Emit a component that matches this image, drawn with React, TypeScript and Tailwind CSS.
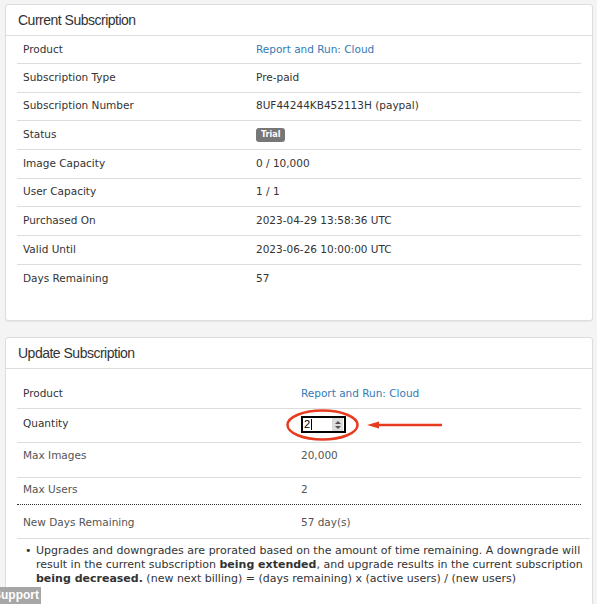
import React from "react";

const body = { fontFamily: '"DejaVu Sans", Verdana, sans-serif' };
const head = { fontFamily: '"Liberation Sans", Arial, sans-serif' };

type Row = { label: string; value: React.ReactNode };

const current: Row[] = [
  { label: "Product", value: <span className="text-[#337ab7]">Report and Run: Cloud</span> },
  { label: "Subscription Type", value: "Pre-paid" },
  { label: "Subscription Number", value: "8UF44244KB452113H (paypal)" },
  {
    label: "Status",
    value: (
      <span className="inline-flex h-[14px] items-center rounded-[3px] bg-[#777] px-[5px] text-[8px] font-bold text-white">
        Trial
      </span>
    ),
  },
  { label: "Image Capacity", value: "0 / 10,000" },
  { label: "User Capacity", value: "1 / 1" },
  { label: "Purchased On", value: "2023-04-29 13:58:36 UTC" },
  { label: "Valid Until", value: "2023-06-26 10:00:00 UTC" },
  { label: "Days Remaining", value: "57" },
];

function PanelHeader({ title }: { title: string }) {
  return (
    <div
      className="flex h-[31px] items-center border-b border-[#ddd] pb-[1px] pl-[12px] text-[14px] tracking-[-0.5px] text-[#333]"
      style={head}
    >
      {title}
    </div>
  );
}

function QuantityInput() {
  return (
    <div className="relative">
      <div className="flex h-[17px] w-[45px] items-center border-2 border-black bg-white pl-[1px]">
        <span className="text-[11px] leading-none text-black" style={{ fontFamily: '"Liberation Sans", Arial, sans-serif' }}>
          2
        </span>
        <span className="ml-[1px] h-[11px] w-px bg-black" />
        <div className="ml-auto mr-[1px] flex h-[13px] w-[11px] flex-col items-center justify-center gap-[2px] bg-[#dcdcdc]">
          <span className="h-0 w-0 border-x-[3px] border-b-[3px] border-x-transparent border-b-[#505050]" />
          <span className="h-0 w-0 border-x-[3px] border-t-[3px] border-x-transparent border-t-[#505050]" />
        </div>
      </div>
      {/* red annotation: circle round the field and arrow pointing at it */}
      <svg className="pointer-events-none absolute left-[-20px] top-[-10px]" width="170" height="40" viewBox="0 0 170 40">
        <ellipse cx="41.5" cy="19" rx="35" ry="14.5" fill="none" stroke="#e63b1f" strokeWidth="2.5" />
        <line x1="96" y1="19" x2="161" y2="19" stroke="#e63b1f" strokeWidth="2.5" />
        <polygon points="86,19 98,15.5 98,22.5" fill="#e63b1f" />
      </svg>
    </div>
  );
}

export default function App() {
  return (
    <div className="min-h-[604px] bg-[#f4f4f4] pb-[40px] pt-[4px] text-[10.5px] leading-[14px] text-[#333]" style={body}>
      <section className="ml-[5px] mr-[4px] rounded-[3px] border border-[#ddd] bg-white shadow-[0_1px_1px_rgba(0,0,0,0.05)]">
        <PanelHeader title="Current Subscription" />
        <div className="px-[11px] pb-[27px]">
          {current.map((r, i) => (
            <div
              key={r.label}
              className={`flex items-center pb-[2px] ${i === 0 ? "h-[28px]" : "h-[28.67px]"} ${
                i < current.length - 1 ? "border-b border-[#ddd]" : ""
              }`}
            >
              <div className="w-[233px] pl-[6px]">{r.label}</div>
              <div className="pl-[6px]">{r.value}</div>
            </div>
          ))}
        </div>
      </section>

      <section className="ml-[5px] mr-[4px] mt-[16px] rounded-[3px] border border-[#ddd] bg-white shadow-[0_1px_1px_rgba(0,0,0,0.05)]">
        <PanelHeader title="Update Subscription" />
        <div className="pl-[11px] pr-[2px] pt-[11px]">
          <div className="mr-[9px]">
            <div className="flex h-[29px] border-b border-[#ddd] pt-[6px]">
              <div className="w-[278px] pl-[6px]">Product</div>
              <div className="pl-[6px] text-[#337ab7]">Report and Run: Cloud</div>
            </div>
            <div className="flex h-[34px] border-b border-[#ddd]">
              <div className="w-[278px] pl-[6px] pt-[7px]">Quantity</div>
              <div className="pl-[6px] pt-[7px]">
                <QuantityInput />
              </div>
            </div>
            <div className="flex h-[35px] border-b border-[#ddd] pt-[5px] text-[#555]">
              <div className="w-[278px] pl-[6px]">Max Images</div>
              <div className="pl-[6px]">20,000</div>
            </div>
            <div className="flex h-[27px] border-b border-dotted border-[#333] pt-[4px] text-[#555]">
              <div className="w-[278px] pl-[6px]">Max Users</div>
              <div className="pl-[6px]">2</div>
            </div>
            <div className="flex h-[33px] pt-[10px] text-[#555]">
              <div className="w-[278px] pl-[6px]">New Days Remaining</div>
              <div className="pl-[6px]">57 day(s)</div>
            </div>
          </div>
          <ul className="border-t border-[#ddd] pb-[20px] pt-[5px] text-[11px]">
            <li className="flex">
              <span className="w-[19px] shrink-0 pl-[8px]">•</span>
              <span className="whitespace-nowrap">
                Upgrades and downgrades are prorated based on the amount of time remaining. A downgrade will
                <br />
                result in the current subscription <b>being extended</b>, and upgrade results in the current subscription
                <br />
                <b>being decreased.</b> (new next billing) = (days remaining) x (active users) / (new users)
              </span>
            </li>
          </ul>
        </div>
      </section>

      <div className="fixed bottom-0 left-0 h-[17px] w-[41px] overflow-hidden bg-[#a6a6a6]">
        <span
          className="ml-[-7px] block pt-[1px] text-[12px] font-bold leading-[15px] text-white"
          style={{ fontFamily: '"Liberation Sans", Arial, sans-serif' }}
        >
          Support
        </span>
      </div>
    </div>
  );
}
